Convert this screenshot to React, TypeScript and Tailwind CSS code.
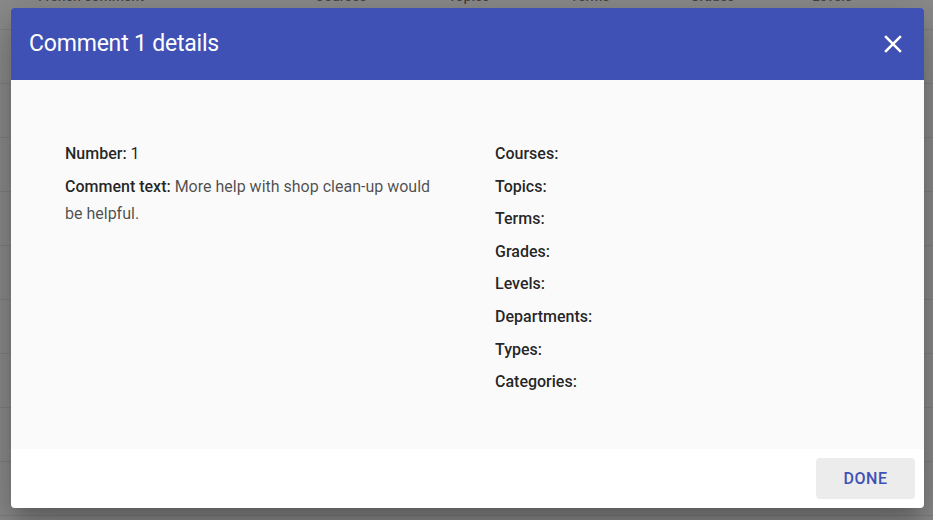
import React from 'react';

const headers = [
  { label: 'French comment', w: 'w-[277px]' },
  { label: 'Courses', w: 'w-[133px]' },
  { label: 'Topics', w: 'w-[122px]' },
  { label: 'Terms', w: 'w-[120px]' },
  { label: 'Grades', w: 'w-[122px]' },
  { label: 'Levels', w: 'w-[100px]' },
];

const fields = ['Courses', 'Topics', 'Terms', 'Grades', 'Levels', 'Departments', 'Types', 'Categories'];

export default function App() {
  return (
    <div className="relative w-[933px] h-[520px] overflow-hidden bg-white font-['Roboto',sans-serif]">
      {/* table behind the dialog */}
      <div className="flex flex-col">
        <div className="flex h-[30px] pl-[38px] items-start text-[14px] leading-[20px] font-medium text-black/60 border-b border-black/10">
          {headers.map((h) => (
            <div key={h.label} className={`${h.w} -mt-[14px]`}>{h.label}</div>
          ))}
        </div>
        {Array.from({ length: 9 }).map((_, i) => (
          <div key={i} className="h-[54px] border-b border-black/10" />
        ))}
      </div>

      {/* overlay */}
      <div className="absolute inset-0 bg-[rgba(33,33,33,0.52)]" />

      {/* dialog */}
      <div className="absolute left-[11px] top-[8px] w-[913px] rounded-[4px] overflow-hidden shadow-[0_11px_15px_-7px_rgba(0,0,0,0.2),0_24px_38px_3px_rgba(0,0,0,0.14),0_9px_46px_8px_rgba(0,0,0,0.12)]">
        <div className="h-[72px] bg-[#3f51b5] flex items-center justify-between pl-[18px] pr-[16px]">
          <h2 className="text-white text-[23px] tracking-[-0.2px]">Comment 1 details</h2>
          <button className="text-white">
            <svg width="30" height="30" viewBox="0 0 24 24">
              <path d="M19 6.41 17.59 5 12 10.59 6.41 5 5 6.41 10.59 12 5 17.59 6.41 19 12 13.41 17.59 19 19 17.59 13.41 12z" fill="currentColor" />
            </svg>
          </button>
        </div>

        <div className="h-[369px] bg-[#fafafa] pt-[60px] pl-[54px] flex text-[16px] text-black/[0.87] leading-[27px]">
          <div className="w-[430px] pr-[50px] flex flex-col gap-[5.5px]">
            <div><span className="font-medium">Number:</span> 1</div>
            <div className="text-black/70"><span className="font-medium text-black/[0.87]">Comment text:</span> More help with shop clean-up would be helpful.</div>
          </div>
          <div className="flex flex-col gap-[5.6px]">
            {fields.map((f) => (
              <div key={f} className="font-medium">{f}:</div>
            ))}
          </div>
        </div>

        <div className="h-[59px] bg-white flex justify-end items-start pt-[9px] pr-[9px]">
          <button className="w-[99px] h-[41px] rounded-[4px] bg-[#ececec] text-[#3f51b5] text-[16px] font-medium tracking-[0.5px]">
            DONE
          </button>
        </div>
      </div>
    </div>
  );
}
